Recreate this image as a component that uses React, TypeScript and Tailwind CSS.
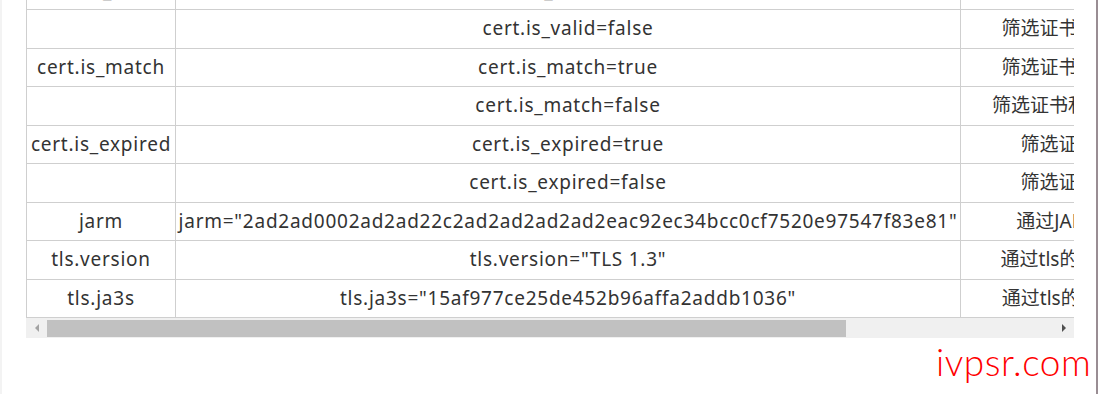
import React from "react";

const rows = [
  { field: "cert.is_valid", query: "cert.is_valid=true", desc: "筛选证书是有效证书的资产" },
  { field: "", query: "cert.is_valid=false", desc: "筛选证书是无效证书的资产" },
  { field: "cert.is_match", query: "cert.is_match=true", desc: "筛选证书和域名匹配的资产" },
  { field: "", query: "cert.is_match=false", desc: "筛选证书和域名不匹配的资产" },
  { field: "cert.is_expired", query: "cert.is_expired=true", desc: "筛选证书已过期的资产" },
  { field: "", query: "cert.is_expired=false", desc: "筛选证书未过期的资产" },
  {
    field: "jarm",
    query: 'jarm="2ad2ad0002ad2ad22c2ad2ad2ad2ad2eac92ec34bcc0cf7520e97547f83e81"',
    desc: "通过JARM指纹搜索资产",
  },
  { field: "tls.version", query: 'tls.version="TLS 1.3"', desc: "通过tls的协议版本搜索资产" },
  { field: "tls.ja3s", query: 'tls.ja3s="15af977ce25de452b96affa2addb1036"', desc: "通过tls的ja3s指纹搜索资产" },
];

export default function App() {
  return (
    <div
      className="relative flex h-[394px] w-[1101px] overflow-hidden bg-white text-[#333333]"
      style={{ fontFamily: '"Noto Sans", "Noto Sans CJK SC", sans-serif' }}
    >
      <div className="w-[2px] shrink-0 bg-[#f3f3f3]" />

      <div className="w-[1048px] shrink-0 ml-[24px] -mt-[29.5px]">
        {/* table viewport */}
        <div className="overflow-hidden">
          <table className="border-collapse table-fixed w-[1244px] text-[19px]">
            <colgroup>
              <col className="w-[149px]" />
              <col className="w-[785px]" />
              <col className="w-[310px]" />
            </colgroup>
            <tbody>
              {rows.map((r, i) => (
                <tr key={i} className="h-[38.5px]">
                  <td className="border border-[#cfcfcf] p-0 text-center whitespace-nowrap leading-none tracking-[0.75px]">
                    {r.field}
                  </td>
                  <td className="border border-[#cfcfcf] p-0 text-center whitespace-nowrap leading-none tracking-[0.75px]">
                    {r.query}
                  </td>
                  <td className="border border-[#cfcfcf] p-0 text-center whitespace-nowrap leading-none">
                    {r.desc}
                  </td>
                </tr>
              ))}
            </tbody>
          </table>
        </div>

        {/* horizontal scrollbar */}
        <div className="flex h-[20px] items-center bg-[#f0f0f0]">
          <div className="flex h-full w-[21px] items-center justify-center">
            <div className="h-0 w-0 border-y-[4px] border-r-[4px] border-y-transparent border-r-[#a3a3a3]" />
          </div>
          <div className="flex h-full flex-1 items-center">
            <div className="h-[17px] w-[799px] bg-[#c1c1c1]" />
          </div>
          <div className="flex h-full w-[20px] items-center justify-center">
            <div className="h-0 w-0 border-y-[4px] border-l-[4px] border-y-transparent border-l-[#505050]" />
          </div>
        </div>
      </div>

      <div className="w-[22px] shrink-0" />
      <div className="w-[2px] shrink-0 bg-[#998d93]" />

      {/* watermark */}
      <div
        className="absolute left-[936px] top-[343px] text-[37px] font-light leading-none text-[#ff0000] tracking-[0.5px]"
        style={{ fontFamily: '"Lato", "DejaVu Sans", sans-serif' }}
      >
        ivpsr.com
      </div>
    </div>
  );
}
